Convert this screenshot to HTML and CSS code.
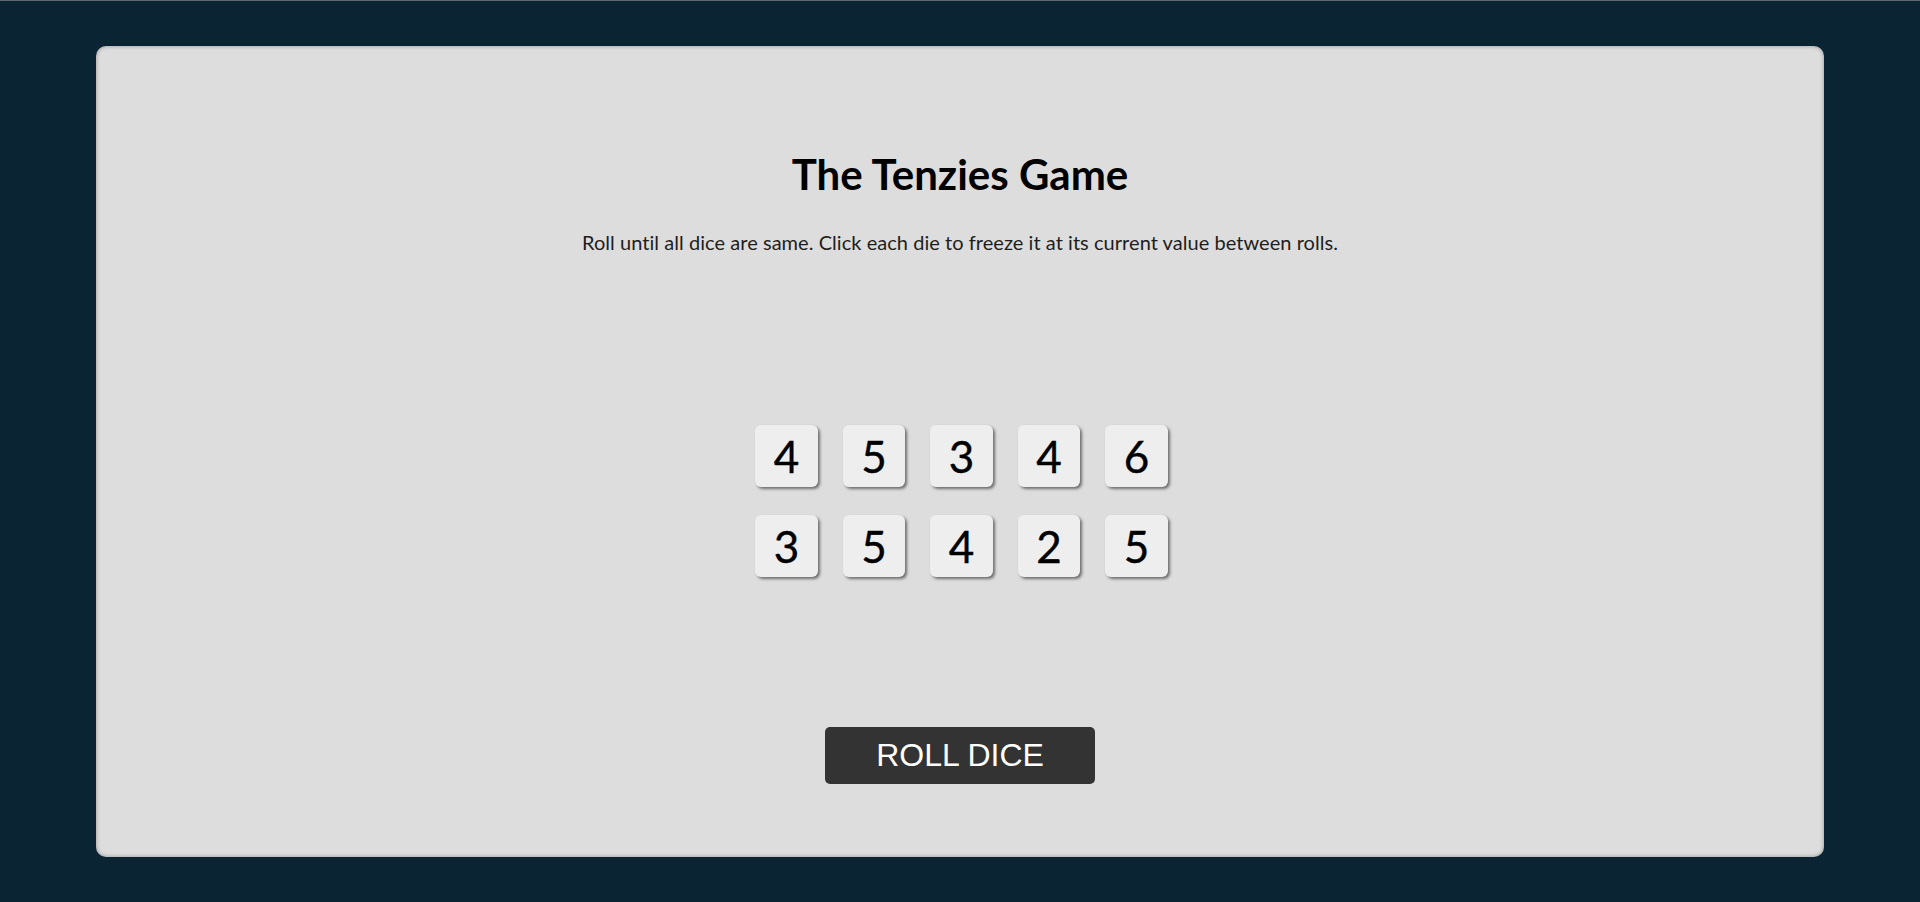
FILE: index.html
```html
<!DOCTYPE html>
<html lang="en">
<head>
<meta charset="utf-8">
<title>Tenzies</title>
<link rel="stylesheet" href="styles.css">
</head>
<body>
<main class="card">
  <h1 class="title">The Tenzies Game</h1>
  <p class="instructions">Roll until all dice are same. Click each die to freeze it at its current value between rolls.</p>
  <div class="dice">
    <div class="die">4</div>
    <div class="die">5</div>
    <div class="die">3</div>
    <div class="die">4</div>
    <div class="die">6</div>
    <div class="die">3</div>
    <div class="die">5</div>
    <div class="die">4</div>
    <div class="die">2</div>
    <div class="die">5</div>
  </div>
  <button class="roll">ROLL DICE</button>
</main>
</body>
</html>
```
FILE: styles.css
```css
html, body {
  margin: 0;
  padding: 0;
}
body {
  height: 100vh;
  box-sizing: border-box;
  border-top: 1px solid #5d6870;
  background: #0b2434;
  display: flex;
  align-items: center;
  justify-content: center;
  font-family: Lato, "Open Sans", sans-serif;
}
.card {
  width: 90vw;
  height: 90vh;
  background: #dddddd;
  border-radius: 10px;
  box-shadow: inset 0 0 4px rgba(0, 0, 0, 0.35);
  display: flex;
  flex-direction: column;
  align-items: center;
}
.title {
  margin: 103px 0 0;
  font-size: 42px;
  line-height: 50px;
  font-weight: 700;
  color: #000;
}
.instructions {
  margin: 31px 0 0;
  font-size: 20px;
  line-height: 24px;
  letter-spacing: 0.045px;
  color: #1e1e1e;
}
.dice {
  margin: 171px 0 0 3px;
  display: grid;
  grid-template-columns: repeat(5, 62.5px);
  grid-auto-rows: 62.5px;
  column-gap: 25px;
  row-gap: 27.5px;
}
.die {
  background: #eeeeee;
  border-radius: 6px;
  box-shadow: 2px 2px 3px rgba(0, 0, 0, 0.5);
  display: flex;
  align-items: center;
  justify-content: center;
  font-size: 44px;
  color: #000;
  -webkit-text-stroke: 0.4px #000;
  cursor: pointer;
}
.roll {
  margin-top: 150px;
  width: 270px;
  height: 57px;
  border: 0;
  outline: none;
  border-radius: 5px;
  background: #333333;
  color: #ffffff;
  font-family: "Liberation Sans", Arial, sans-serif;
  font-size: 32px;
  padding: 0;
  cursor: pointer;
}
```
